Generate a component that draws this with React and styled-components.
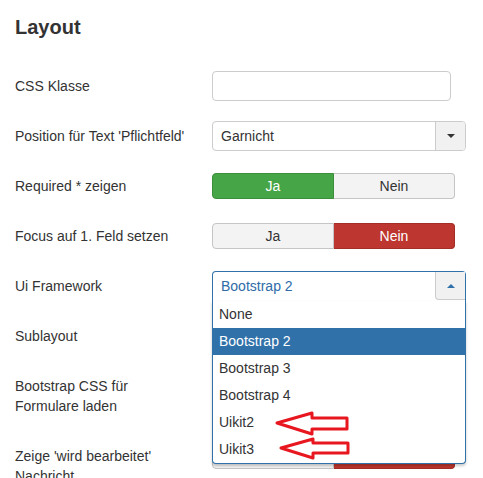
import React from "react";
import styled, { createGlobalStyle } from "styled-components";

const GlobalStyle = createGlobalStyle`
  html, body { margin: 0; padding: 0; background: #fff; }
  body {
    font-family: "Liberation Sans", Arial, Helvetica, sans-serif;
    font-size: 14px;
    color: #333;
    overflow: hidden;
  }
`;

const Page = styled.div`
  position: relative;
  padding: 16px 15px 0;
  width: 483px;
  height: 478px;
  box-sizing: border-box;
`;

const Heading = styled.h2`
  margin: 0 0 33px;
  font-size: 20px;
  line-height: 22px;
  font-weight: bold;
  color: #333;
`;

const Row = styled.div`
  display: flex;
  align-items: flex-start;
  min-height: 30px;
  margin-bottom: 20px;
`;

const Label = styled.div`
  width: 197px;
  flex: none;
  padding: 5px 0 5px;
  line-height: 20px;
  font-size: 14px;
  color: #333;
`;

const Controls = styled.div`
  position: relative;
  display: flex;
  align-items: center;
  height: 30px;
`;

const TextInput = styled.div`
  width: 239px;
  height: 30px;
  box-sizing: border-box;
  border: 1px solid #ccc;
  border-radius: 4px;
  background: #fff;
`;

const SelectBox = styled.div`
  display: flex;
  width: 254px;
  height: 30px;
  box-sizing: border-box;
  border: 1px solid ${(p) => (p.$open ? "#3071a9" : "#ccc")};
  border-bottom: ${(p) => (p.$open ? "none" : "1px solid #ccc")};
  border-radius: ${(p) => (p.$open ? "4px 4px 0 0" : "4px")};
  background: #fff;
`;

const SelectValue = styled.div`
  flex: 1;
  padding-left: 8px;
  line-height: 28px;
  font-size: 14px;
  color: ${(p) => (p.$open ? "#2f6ca8" : "#333")};
`;

const SelectButton = styled.div`
  width: 30px;
  flex: none;
  display: flex;
  align-items: center;
  justify-content: center;
  box-sizing: border-box;
  border-left: 1px solid #ccc;
  height: 28px;
  border-bottom: ${(p) => (p.$open ? "1px solid #ccc" : "none")};
  border-radius: ${(p) => (p.$open ? "0 0 0 4px" : "0 3px 3px 0")};
  background: #f1f1f1;
`;

const Caret = styled.span`
  width: 0;
  height: 0;
  border-left: 4px solid transparent;
  border-right: 4px solid transparent;
  ${(p) =>
    p.$up
      ? `border-bottom: 4px solid #3071a9;`
      : `border-top: 4px solid #333;`}
`;

const Toggle = styled.div`
  display: flex;
  width: 243px;
  height: 26px;
  margin-top: 2px;
  align-self: flex-start;
`;

const ToggleButton = styled.div`
  flex: 1;
  display: flex;
  align-items: center;
  justify-content: center;
  box-sizing: border-box;
  font-size: 14px;
  border: 1px solid;
  ${(p) =>
    p.$first
      ? "border-radius: 4px 0 0 4px;"
      : "border-radius: 0 4px 4px 0; border-left: none;"}
  ${(p) =>
    p.$active === "yes"
      ? "background: #46a546; border-color: #3b8f3b; color: #fff;"
      : p.$active === "no"
      ? "background: #bd362f; border-color: #a32d27; color: #fff;"
      : "background: #f3f3f3; border-color: #c5c5c5; color: #333;"}
`;

const OpenSelect = styled.div`
  position: relative;
  width: 254px;
  height: 30px;
`;

const Menu = styled.ul`
  position: absolute;
  top: 100%;
  left: 0;
  width: 254px;
  box-sizing: border-box;
  margin: 0;
  padding: 0;
  list-style: none;
  background: #fff;
  border: 1px solid #3071a9;
  border-top: none;
  border-radius: 0 0 4px 4px;
  box-shadow: 0 2px 3px rgba(0, 0, 0, 0.22);
  z-index: 10;
`;

const MenuItem = styled.li`
  height: 27px;
  line-height: 27px;
  padding-left: 6px;
  font-size: 14px;
  color: ${(p) => (p.$selected ? "#fff" : "#333")};
  background: ${(p) => (p.$selected ? "#3071a9" : "transparent")};
`;

const Annotation = styled.svg`
  position: absolute;
  left: 0;
  top: 0;
  pointer-events: none;
  z-index: 20;
`;

const YesNo = ({ value }) => (
  <Toggle>
    <ToggleButton $first $active={value === "yes" ? "yes" : undefined}>
      Ja
    </ToggleButton>
    <ToggleButton $active={value === "no" ? "no" : undefined}>Nein</ToggleButton>
  </Toggle>
);

const options = ["None", "Bootstrap 2", "Bootstrap 3", "Bootstrap 4", "Uikit2", "Uikit3"];

export default function App() {
  return (
    <>
      <GlobalStyle />
      <Page>
        <Heading>Layout</Heading>

        <Row>
          <Label>CSS Klasse</Label>
          <Controls>
            <TextInput />
          </Controls>
        </Row>

        <Row>
          <Label>Position für Text 'Pflichtfeld'</Label>
          <Controls>
            <SelectBox>
              <SelectValue>Garnicht</SelectValue>
              <SelectButton>
                <Caret />
              </SelectButton>
            </SelectBox>
          </Controls>
        </Row>

        <Row>
          <Label>Required * zeigen</Label>
          <Controls>
            <YesNo value="yes" />
          </Controls>
        </Row>

        <Row>
          <Label>Focus auf 1. Feld setzen</Label>
          <Controls>
            <YesNo value="no" />
          </Controls>
        </Row>

        <Row>
          <Label>Ui Framework</Label>
          <Controls>
            <OpenSelect>
              <SelectBox $open>
                <SelectValue $open>Bootstrap 2</SelectValue>
                <SelectButton $open>
                  <Caret $up />
                </SelectButton>
              </SelectBox>
              <Menu>
                {options.map((o) => (
                  <MenuItem key={o} $selected={o === "Bootstrap 2"}>
                    {o}
                  </MenuItem>
                ))}
              </Menu>
            </OpenSelect>
          </Controls>
        </Row>

        <Row>
          <Label>Sublayout</Label>
          <Controls>
            <SelectBox>
              <SelectValue />
              <SelectButton>
                <Caret />
              </SelectButton>
            </SelectBox>
          </Controls>
        </Row>

        <Row>
          <Label>
            Bootstrap CSS für
            <br />
            Formulare laden
          </Label>
          <Controls>
            <YesNo value="yes" />
          </Controls>
        </Row>

        <Row>
          <Label>
            Zeige 'wird bearbeitet'
            <br />
            Nachricht
          </Label>
          <Controls>
            <YesNo value="no" />
          </Controls>
        </Row>

        <Annotation width="483" height="478" viewBox="0 0 483 478">
          <polygon
            points="277,423 312,413 312,418 347,418 347,429 312,429 312,434"
            fill="none"
            stroke="#e8161e"
            strokeWidth="3"
            strokeLinejoin="round"
          />
          <polygon
            points="281,448 313,439 313,443 348,443 348,453 313,453 313,458"
            fill="none"
            stroke="#e8161e"
            strokeWidth="3"
            strokeLinejoin="round"
          />
        </Annotation>
      </Page>
    </>
  );
}
